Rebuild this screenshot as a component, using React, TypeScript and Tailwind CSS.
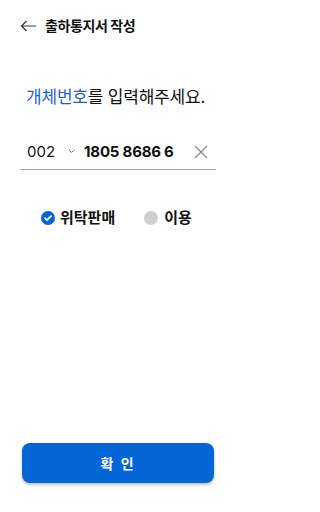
import { useState } from "react";

const font = { fontFamily: 'Inter, "Noto Sans CJK KR", sans-serif' };

function BackArrow() {
  return (
    <svg width="17" height="12" viewBox="0 0 17 12" fill="none" stroke="#333" strokeWidth="1.2">
      <path d="M16 6H1.5M6.5 1L1.5 6l5 5" />
    </svg>
  );
}

function Chevron() {
  return (
    <svg width="7" height="5" viewBox="0 0 7 5" fill="none" stroke="#777" strokeWidth="1">
      <path d="M1 1l2.5 2.5L6 1" />
    </svg>
  );
}

function ClearIcon() {
  return (
    <svg width="14" height="14" viewBox="0 0 14 14" fill="none" stroke="#8a8a8a" strokeWidth="1.3">
      <path d="M1 1l12 12M13 1L1 13" />
    </svg>
  );
}

function Radio({ checked }: { checked: boolean }) {
  return checked ? (
    <svg width="14" height="14" viewBox="0 0 14 14">
      <circle cx="7" cy="7" r="7" fill="#0a63d6" />
      <path d="M4 7.2l2 2 4-4" fill="none" stroke="#fff" strokeWidth="1.8" strokeLinecap="round" strokeLinejoin="round" />
    </svg>
  ) : (
    <span className="block h-[14px] w-[14px] rounded-full bg-[#cfcfcf]" />
  );
}

export default function App() {
  const [type, setType] = useState<"sale" | "use">("sale");

  return (
    <div className="flex h-[512px] w-[236px] flex-col bg-white text-[#111]" style={font}>
      <header className="flex items-center gap-[8px] pl-[20px] pt-[18px]">
        <BackArrow />
        <h1 className="text-[14px] font-bold leading-[16px] tracking-[-0.4px]">출하통지서 작성</h1>
      </header>

      <p className="mt-[52px] pl-[26px] text-[17px] font-normal leading-[22px] tracking-[-0.2px]">
        <span className="text-[#1f5fcf]">개체번호</span>를 입력해주세요.
      </p>

      <div className="mx-[20px] mt-[34px] flex items-center border-b border-[#a8a8a8] pb-[7px] pl-[7px] pr-[8px]">
        <span className="text-[15px] leading-[20px]">002</span>
        <span className="ml-[13px] mt-[-2px]">
          <Chevron />
        </span>
        <span className="ml-[9px] text-[15px] font-bold leading-[20px] tracking-[-0.2px]">1805 8686 6</span>
        <span className="ml-auto">
          <ClearIcon />
        </span>
      </div>

      <div className="mt-[38px] flex items-center pl-[41px]">
        <button className="flex items-center gap-[5px]" onClick={() => setType("sale")}>
          <Radio checked={type === "sale"} />
          <span className="text-[15px] font-bold leading-[20px]">위탁판매</span>
        </button>
        <button className="ml-[29px] flex items-center gap-[6px]" onClick={() => setType("use")}>
          <Radio checked={type === "use"} />
          <span className="text-[15px] font-bold leading-[20px]">이용</span>
        </button>
      </div>

      <div className="mt-auto px-[22px] pb-[29px]">
        <button className="flex h-[40px] w-full items-center justify-center rounded-[8px] bg-[#0566d8] text-[14px] font-bold tracking-[2px] text-white shadow-[0_2px_3px_rgba(0,0,0,0.25)]">
          확 인
        </button>
      </div>
    </div>
  );
}
